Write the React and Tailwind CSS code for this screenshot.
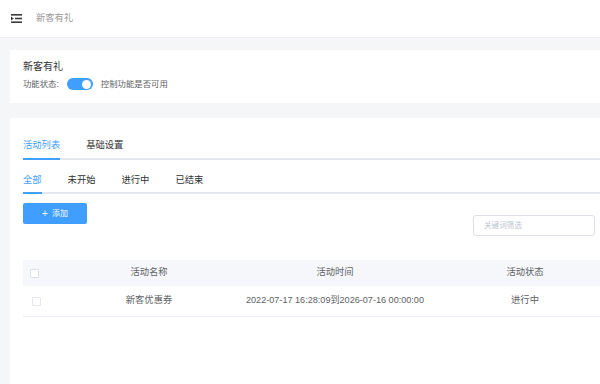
import React, { useState } from "react";

const tabs = ["活动列表", "基础设置"];
const subTabs = ["全部", "未开始", "进行中", "已结束"];

const rows = [
  {
    name: "新客优惠券",
    time: "2022-07-17 16:28:09到2026-07-16 00:00:00",
    status: "进行中",
  },
];

const FoldIcon = () => (
  <svg width="11" height="9" viewBox="0 0 11 9" fill="#3a3a3a">
    <rect x="0" y="0" width="11" height="1.6" />
    <rect x="4" y="3.7" width="7" height="1.6" />
    <path d="M0 2.6 L2.8 4.5 L0 6.4 Z" />
    <rect x="0" y="7.4" width="11" height="1.6" />
  </svg>
);

const App = () => {
  const [enabled, setEnabled] = useState(true);
  const [activeTab, setActiveTab] = useState(0);
  const [activeSub, setActiveSub] = useState(0);

  return (
    <div className="w-[600px] h-[384px] overflow-hidden bg-[#f5f6f8] font-['Liberation_Sans','Noto_Sans_CJK_SC',sans-serif]">
      <div className="w-[642px]">
        {/* top bar */}
        <div className="h-[38px] bg-white flex items-center pl-[11px] border-b border-[#eceef1]">
          <FoldIcon />
          <span className="ml-[14px] text-[9.3px] text-[#999]">新客有礼</span>
        </div>

        <div className="px-[10px] pt-[12px] flex flex-col gap-[15px]">
          {/* switch card */}
          <div className="bg-white h-[53px] px-[13px] pt-[10px]">
            <div className="text-[10px] leading-[14px] text-[#303133]">新客有礼</div>
            <div className="mt-[4px] flex items-center h-[12px] text-[8.4px] text-[#606266]">
              <span>功能状态:</span>
              <button
                onClick={() => setEnabled(!enabled)}
                className={
                  "ml-[8px] w-[26px] h-[12px] rounded-full flex items-center px-[1.5px] " +
                  (enabled ? "bg-[#409eff] justify-end" : "bg-[#dcdfe6] justify-start")
                }
              >
                <span className="w-[9px] h-[9px] rounded-full bg-white block" />
              </button>
              <span className="ml-[8px]">控制功能是否可用</span>
            </div>
          </div>

          {/* list card */}
          <div className="bg-white h-[300px] px-[13px] pt-[14px]">
            <div className="flex gap-[26px] border-b-2 border-[#e4e7ed]">
              {tabs.map((t, i) => (
                <div
                  key={t}
                  onClick={() => setActiveTab(i)}
                  className={
                    "h-[28px] leading-[26px] -mb-[2px] border-b-2 text-[9.3px] cursor-pointer " +
                    (activeTab === i
                      ? "border-[#409eff] text-[#409eff]"
                      : "border-transparent text-[#303133]")
                  }
                >
                  {t}
                </div>
              ))}
            </div>

            <div className="mt-[9px] flex gap-[26px] border-b-2 border-[#e4e7ed]">
              {subTabs.map((t, i) => (
                <div
                  key={t}
                  onClick={() => setActiveSub(i)}
                  className={
                    "h-[25px] leading-[23px] -mb-[2px] border-b-2 text-[9.3px] cursor-pointer " +
                    (activeSub === i
                      ? "border-[#409eff] text-[#409eff]"
                      : "border-transparent text-[#303133]")
                  }
                >
                  {t}
                </div>
              ))}
            </div>

            <div className="mt-[9px] flex items-start justify-between pr-[24px]">
              <button className="w-[64px] h-[21px] rounded-[2px] bg-[#409eff] text-white text-[8px] flex items-center justify-center gap-[4px]">
                <span className="text-[10px] leading-none font-light">+</span>
                <span>添加</span>
              </button>
              <input
                className="mt-[12px] w-[122px] h-[21px] rounded-[3px] border border-[#dcdfe6] px-[10px] text-[7.6px] text-[#606266] placeholder:text-[#c0c4cc] outline-none"
                placeholder="关键词筛选"
              />
            </div>

            <div className="mt-[24px] text-[9.3px] text-[#606266]">
              <div className="h-[26px] bg-[#f5f7fa] grid grid-cols-[32px_1fr_1fr_1fr] items-center">
                <div className="pl-[7px]">
                  <div className="w-[9px] h-[9px] bg-white border border-[#dcdfe6] rounded-[1px]" />
                </div>
                <div className="text-center">活动名称</div>
                <div className="text-center -ml-[4px]">活动时间</div>
                <div className="text-center">活动状态</div>
              </div>
              {rows.map((r) => (
                <div
                  key={r.name}
                  className="h-[31px] border-b border-[#ebeef5] grid grid-cols-[32px_1fr_1fr_1fr] items-center"
                >
                  <div className="pl-[9px]">
                    <div className="w-[9px] h-[9px] bg-white border border-[#e4e7ed] rounded-[1px]" />
                  </div>
                  <div className="text-center">{r.name}</div>
                  <div className="text-center whitespace-nowrap -ml-[4px] text-[9.1px]">{r.time}</div>
                  <div className="text-center">{r.status}</div>
                </div>
              ))}
            </div>
          </div>
        </div>
      </div>
    </div>
  );
};

export default App;
